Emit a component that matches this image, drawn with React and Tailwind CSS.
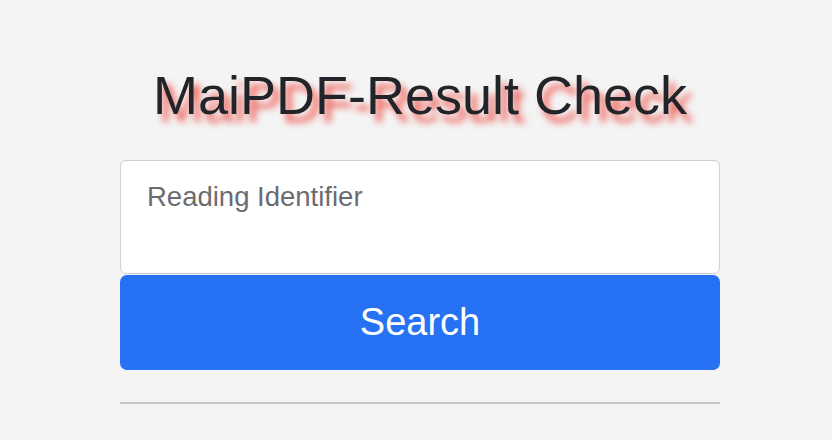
export default function App() {
  return (
    <div className="min-h-screen bg-[#f4f4f4] font-['Liberation_Sans',Arial,sans-serif]">
      <div className="ml-[120px] w-[600px] pt-[60px]">
        <h1 className="text-center text-[54px] leading-[70px] text-[#212529] [text-shadow:6px_8px_7px_rgba(236,60,50,0.85)]">
          MaiPDF-Result Check
        </h1>
        <textarea
          placeholder="Reading Identifier"
          className="mt-[30px] block h-[114px] w-full resize-none rounded-[6px] border border-[#cdd0d4] bg-white px-[26px] pt-[16px] text-[27.5px] leading-[40px] text-[#212529] placeholder:text-[#6c6c70] focus:outline-none"
        />
        <button className="mt-[1px] flex h-[95px] w-full items-center justify-center rounded-[7px] bg-[#2771f5] text-[38px] text-white">
          Search
        </button>
        <hr className="mt-[32px] border-t-2 border-[#c4c4c4]" />
      </div>
    </div>
  );
}
